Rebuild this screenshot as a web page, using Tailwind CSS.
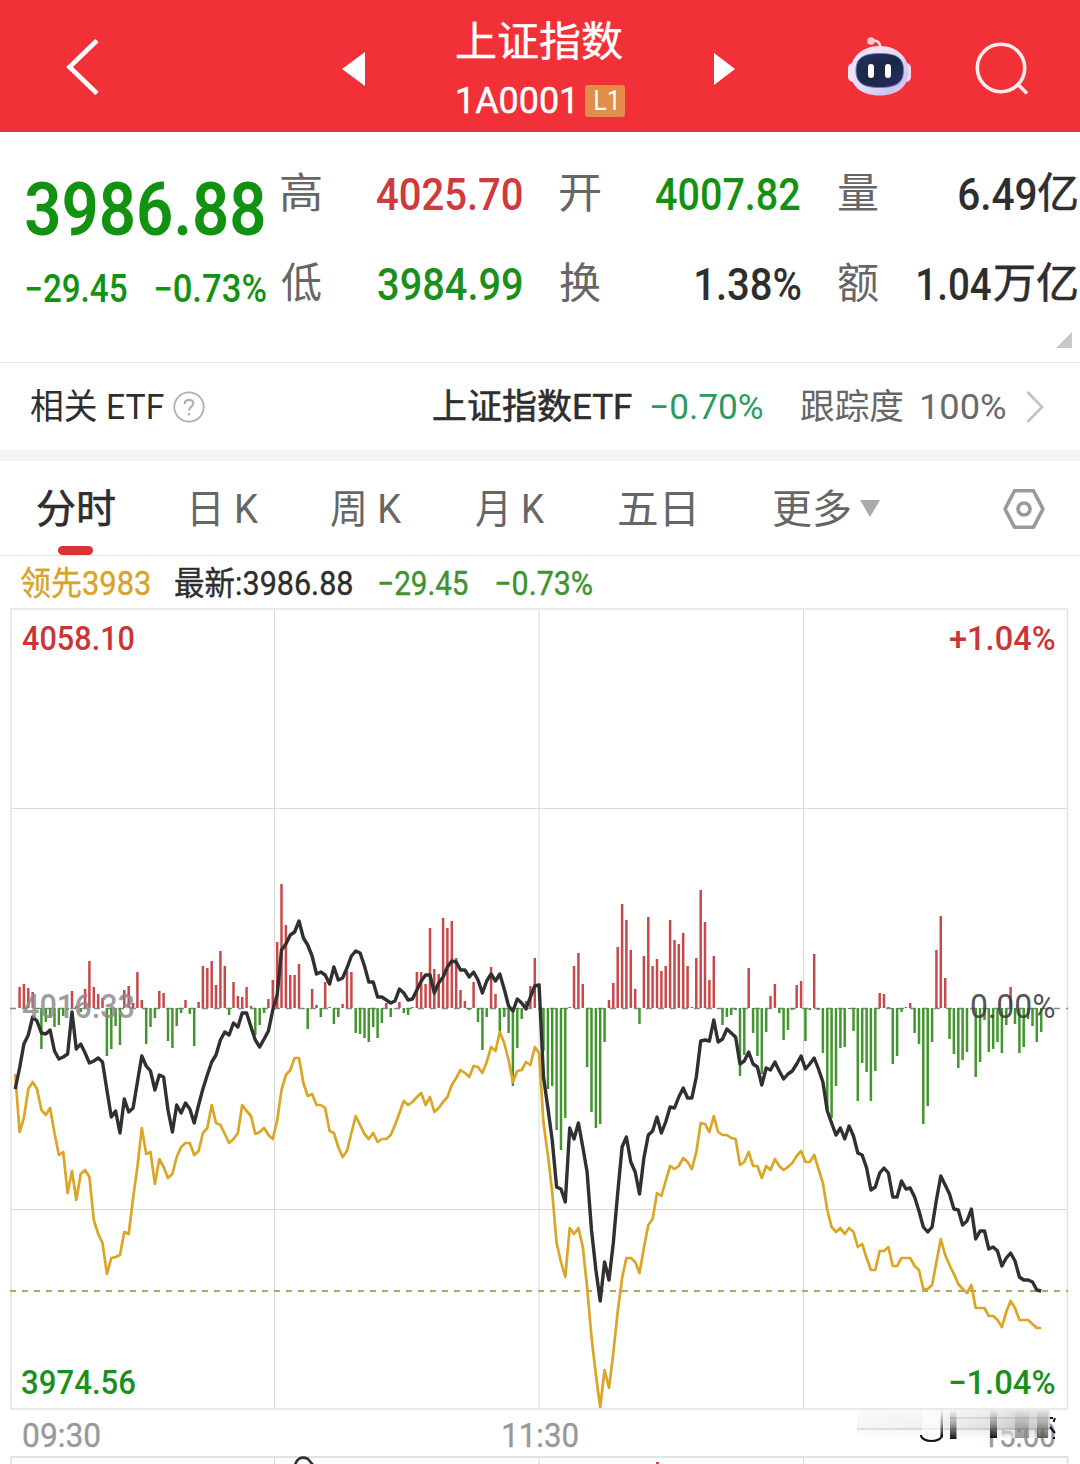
<!DOCTYPE html>
<html lang="zh-CN">
<head>
<meta charset="utf-8">
<title>上证指数</title>
<script src="https://cdn.jsdelivr.net/npm/@tailwindcss/browser@4"></script>
</head>
<body class="bg-white">
<main class="w-[1080px] h-[1464px] overflow-hidden flex flex-col bg-white font-['Roboto','Noto_Sans_CJK_SC',sans-serif] text-[#2e2e2e]">

  <!-- Title bar -->
  <header class="h-[132px] shrink-0 flex bg-[#f23037] border-b-2 border-[#d8333b] text-white">
    <svg class="w-[50px] h-[130px] ml-[58px] shrink-0" viewBox="58 0 50 130" fill="none" stroke="#fff" stroke-width="4.6"><path d="M97 40.500 69.500 67 97 93.500"/></svg>
    <svg class="w-[24px] h-[130px] ml-[234px] shrink-0" viewBox="342 0 24 130" fill="#fff"><path d="M342 69 365 52V86Z"/></svg>
    <div class="ml-[91px] w-[168px] shrink-0 flex flex-col">
      <div class="h-[46px] mt-[16px] leading-[46px] text-[41px] font-['Noto_Sans_CJK_SC',sans-serif]"><span data-fit class="block w-[165px] -mt-[1px] [-webkit-text-stroke:0.4px]">上证指数</span></div>
      <div class="mt-[21px] h-[36px] flex items-center">
        <span data-fit class="block w-[114px] ml-[1px] text-[36px] leading-[36px] [-webkit-text-stroke:0.5px]">1A0001</span>
        <div class="ml-[13px] w-[40px] h-[32px] shrink-0 rounded-[3px] bg-[#e08e4a] flex items-center justify-center"><span data-fit class="block w-[21px] text-[27px] leading-[32px]">L1</span></div>
      </div>
    </div>
    <svg class="w-[22px] h-[130px] ml-[89px] shrink-0" viewBox="714 0 22 130" fill="#fff"><path d="M714 53 735 69 714 85Z"/></svg>
    <svg class="w-[70px] h-[130px] ml-[108px] shrink-0" viewBox="844 0 70 130">
      <defs>
        <linearGradient id="shell" x1="0" y1="0" x2="1" y2="1"><stop offset="0" stop-color="#ffe9f0"/><stop offset=".5" stop-color="#e6dcfa"/><stop offset=".8" stop-color="#c9c4f6"/><stop offset="1" stop-color="#ffd7df"/></linearGradient>
        <linearGradient id="visor" x1="0" y1="0" x2="1" y2="1"><stop offset="0" stop-color="#25335c"/><stop offset=".5" stop-color="#1b2744"/><stop offset="1" stop-color="#25305f"/></linearGradient>
      </defs>
      <path d="M872 41C877 40 880 42 880 47" fill="none" stroke="#ffd9de" stroke-width="2.600"/>
      <circle cx="871" cy="41" r="3.800" fill="#ffc9d0"/>
      <rect x="848" y="63" width="10" height="19" rx="5" fill="#fbe6f2"/><rect x="901" y="63" width="10" height="19" rx="5" fill="#f6d6ee"/>
      <path d="M880 46C897 46 908.500 57 908.500 72C908.500 86 898 95.500 879.500 95.500C861 95.500 850.500 86 850.500 72C850.500 57 862 46 880 46Z" fill="url(#shell)"/>
      <path d="M880 53.500C897 53.500 903.500 58 903.500 70.500C903.500 83 896 87.500 880 87.500C863 87.500 856 83 856 70.500C856 58 863 53.500 880 53.500Z" fill="url(#visor)" stroke="#6f78c8" stroke-width="1"/>
      <rect x="868" y="64" width="6" height="14" rx="3" fill="#fff"/><rect x="885" y="64" width="6" height="14" rx="3" fill="#fff"/>
    </svg>
    <svg class="w-[60px] h-[130px] ml-[58px] shrink-0" viewBox="972 0 60 130" fill="none" stroke="#ffeceb" stroke-width="3.600"><circle cx="1001" cy="68" r="23.700"/><path d="M1017.500 84 1027 93.500"/></svg>
  </header>

  <!-- Quote summary -->
  <section class="h-[231px] shrink-0 border-b border-[#e8e8e8] flex text-[43.500px] font-medium">
    <div class="ml-[26px] w-[255px] shrink-0 text-[#119211]">
      <div class="mt-[35px] h-[84px]"><span data-fit class="block w-[238px] text-[75px] leading-[84px] font-semibold">3986.88</span></div>
      <div class="mt-[16px] flex text-[38px] leading-[44px]"><span data-fit class="block w-[101px]">−29.45</span><span data-fit class="block w-[111px] ml-[28px]">−0.73%</span></div>
    </div>
    <div class="mt-[32px] shrink-0 flex flex-col gap-[30px] leading-[60px]">
      <div class="flex h-[60px]">
        <span data-fit class="block w-[40px] text-[42px] font-normal text-[#666]">高</span>
        <span data-fit class="block w-[145px] ml-[56px] mt-[2px] text-[#d03a3c]">4025.70</span>
        <span data-fit class="block w-[40px] ml-[38px] text-[42px] font-normal text-[#666]">开</span>
        <span data-fit class="block w-[144px] ml-[56px] mt-[2px] text-[#119211]">4007.82</span>
        <span data-fit class="block w-[40px] ml-[38px] text-[42px] font-normal text-[#666]">量</span>
        <span data-fit class="block w-[77px] ml-[81px] mt-[2px]">6.49</span>
        <span data-fit class="block w-[39px] ml-[2px] text-[42px] font-normal [-webkit-text-stroke:0.6px]">亿</span>
      </div>
      <div class="flex h-[60px]">
        <span data-fit class="block w-[40px] text-[42px] font-normal text-[#666]">低</span>
        <span data-fit class="block w-[144px] ml-[57px] mt-[2px] text-[#1b8f1b]">3984.99</span>
        <span data-fit class="block w-[40px] ml-[38px] text-[42px] font-normal text-[#666]">换</span>
        <span data-fit class="block w-[105px] ml-[96px] mt-[2px]">1.38%</span>
        <span data-fit class="block w-[40px] ml-[37px] text-[42px] font-normal text-[#666]">额</span>
        <span data-fit class="block w-[73px] ml-[40px] mt-[2px]">1.04</span>
        <span data-fit class="block w-[83px] ml-[3px] text-[42px] font-normal [-webkit-text-stroke:0.6px]">万亿</span>
      </div>
      <svg class="w-[16px] h-[16px] self-end -mt-[12px] mr-[5px]" viewBox="0 0 16 16"><path d="M16 0V16H0Z" fill="#c9c9c9"/></svg>
    </div>
  </section>

  <!-- Related ETF -->
  <section class="h-[87px] shrink-0 flex items-center text-[35px] leading-[50px]">
    <span data-fit class="block w-[133px] ml-[31px] mt-[2px]">相关 ETF</span>
    <svg class="w-[32px] h-[32px] ml-[9px] shrink-0" viewBox="0 0 32 32" fill="none" stroke="#b0b0b0" stroke-width="1.800"><circle cx="16" cy="16" r="14.700"/><path d="M11.800 13C11.800 7.500 20.300 7.500 20.300 12.500C20.300 15.500 16 16 16 19.500M16 22V24.500" stroke-width="2.200"/></svg>
    <span data-fit class="block w-[199px] ml-[228px] mt-[2px] [-webkit-text-stroke:0.6px]">上证指数ETF</span>
    <span data-fit class="block w-[112px] ml-[19px] mt-[2px] text-[#2a9c60]">−0.70%</span>
    <span data-fit class="block w-[102px] ml-[38px] mt-[2px] text-[#666]">跟踪度</span>
    <span data-fit class="block w-[85px] ml-[18px] mt-[2px] text-[#6a6a6a]">100%</span>
    <svg class="w-[18px] h-[34px] ml-[20px] shrink-0" viewBox="0 0 18 34" fill="none" stroke="#c2c2c2" stroke-width="2.600"><path d="M1.500 2 16 17 1.500 32"/></svg>
  </section>
  <div class="h-[11px] shrink-0 bg-[#f4f4f4]"></div>

  <!-- Period tabs -->
  <nav class="h-[95px] shrink-0 flex border-b border-[#e4e4e4] text-[40px] leading-[97px] text-[#666]">
    <div class="ml-[37px] w-[78px] shrink-0 flex flex-col text-[#2e2e2e]">
      <span data-fit class="block w-[78px] h-[85px] [-webkit-text-stroke:0.7px]">分时</span>
      <div class="w-[35px] h-[9px] ml-[21px] rounded-full bg-[#dc3335]"></div>
    </div>
    <span data-fit class="block w-[66px] ml-[78px]">日 K</span>
    <span data-fit class="block w-[71px] ml-[72px]">周 K</span>
    <span data-fit class="block w-[69px] ml-[74px]">月 K</span>
    <span data-fit class="block w-[75px] ml-[74px]">五日</span>
    <span data-fit class="block w-[77px] ml-[79px]">更多</span>
    <svg class="w-[20px] h-[18px] ml-[10px] mt-[39px] shrink-0" viewBox="0 0 20 18"><path d="M0 0H20L10 17Z" fill="#aaa"/></svg>
    <svg class="w-[44px] h-[44px] ml-[122px] mt-[26px] shrink-0" viewBox="0 0 44 44" fill="none" stroke="#999" stroke-width="3.600" stroke-linejoin="round"><path d="M12.500 3.800H31.500L41 22 31.500 40.200H12.500L3 22Z"/><circle cx="22" cy="22" r="6"/></svg>
  </nav>

  <!-- Intraday legend -->
  <div class="h-[52px] shrink-0 flex text-[33px] leading-[56px] [-webkit-text-stroke:0.4px]">
    <span data-fit class="block w-[129px] ml-[21px] text-[#d9a32a]">领先3983</span>
    <span data-fit class="block w-[177px] ml-[25px]">最新:3986.88</span>
    <span data-fit class="block w-[89px] ml-[27px] text-[#3f922e]">−29.45</span>
    <span data-fit class="block w-[96px] ml-[28px] text-[#3f922e]">−0.73%</span>
  </div>

  <!-- Intraday chart -->
  <section class="relative h-[802px] shrink-0 text-[33.500px] leading-[45px] font-medium">
    <svg class="block w-[1080px] h-[802px]" viewBox="0 608 1080 802" fill="none">
      <g stroke="#dadada" stroke-width="1"><path d="M274.500 609V1409M539 609V1409M803.500 609V1409M11 808.500H1067M11 1209.500H1067"/><path d="M11 609H1067.500V1409H11Z" stroke="#e4e4e4" stroke-width="1.600"/></g>
      <path d="M10 1008.500H1068" stroke="#888" stroke-width="1.300" stroke-dasharray="6 6"/>
      <path id="up" stroke="#c9494b" stroke-width="2.500"/>
      <path id="down" stroke="#43962f" stroke-width="2.500"/>
      <path d="M10 1291H1068" stroke="#b7a469" stroke-width="1.800" stroke-dasharray="6 6"/>
      <polyline id="lead" stroke="#dba526" stroke-width="2.700" stroke-linejoin="round"/>
      <polyline id="price" stroke="#303030" stroke-width="3.400" stroke-linejoin="round"/>
    </svg>
    <span data-fit class="absolute left-[22px] top-[8px] w-[112px] text-[#cc3537]">4058.10</span>
    <span data-fit class="absolute left-[950px] top-[8px] w-[105px] text-[#cc3537]">+1.04%</span>
    <span data-fit class="absolute left-[22px] top-[376px] w-[112px] text-[#8c8c8c]/85">4016.33</span>
    <span data-fit class="absolute left-[971px] top-[376px] w-[84px] font-normal text-[#3c3c3c]/90">0.00%</span>
    <span data-fit class="absolute left-[22px] top-[752px] w-[113px] text-[#1b8f1b]">3974.56</span>
    <span data-fit class="absolute left-[950px] top-[752px] w-[105px] text-[#1b8f1b]">−1.04%</span>
  </section>

  <!-- Time axis -->
  <div class="relative h-[46px] shrink-0 flex text-[34px] leading-[50px] text-[#999] [-webkit-text-stroke:0.4px]">
    <span data-fit class="block w-[77px] ml-[23px]">09:30</span>
    <span data-fit class="block w-[75px] ml-[403px]">11:30</span>
    <span data-fit class="block w-[71px] ml-[406px]">15:00</span>
    <svg class="absolute left-[850px] top-0 w-[210px] h-[36px]" viewBox="850 1410 210 36" fill="none">
      <defs>
        <linearGradient id="fade" x1="0" y1="0" x2="1" y2="0"><stop offset="0" stop-color="#f5f5f5"/><stop offset=".5" stop-color="#ececec"/><stop offset=".7" stop-color="#dcdcdc"/><stop offset=".83" stop-color="#c4c4c4"/><stop offset="1" stop-color="#ccc"/></linearGradient>
        <linearGradient id="ink" x1="0" y1="0" x2="0" y2="1"><stop offset="0" stop-color="#222" stop-opacity="0"/><stop offset=".5" stop-color="#222" stop-opacity=".4"/><stop offset="1" stop-color="#111"/></linearGradient>
        <linearGradient id="veil" x1="0" y1="0" x2="0" y2="1"><stop offset="0" stop-color="#fff" stop-opacity=".55"/><stop offset=".7" stop-color="#fff" stop-opacity="0"/><stop offset="1" stop-color="#fff" stop-opacity=".6"/></linearGradient>
      </defs>
      <path d="M857 1410H1050V1430H857Z" fill="url(#fade)"/>
      <path d="M857 1430H1050V1438H857Z" fill="url(#fade)" opacity=".5"/>
      <path d="M857 1410H1050V1438H857Z" fill="url(#veil)"/>
      <path d="M857 1429H1053M950 1418H1053" stroke="#999" stroke-opacity=".25" stroke-width="2"/>
      <path d="M922 1410H941V1438H922Z" fill="#fff" opacity=".6"/>
      <g fill="url(#ink)"><path d="M950 1410H956.500V1439H950Z"/><path d="M990 1410H997V1438H990Z"/><path d="M940.500 1410H943V1437H940.500Z"/><path d="M1015 1410H1029V1438H1015Z" opacity=".4"/><path d="M1037 1410H1048V1438H1037Z" opacity=".65"/></g>
      <path d="M921 1435C921 1443 942 1443 942 1435" stroke="#111" stroke-width="2"/>
      <path d="M1050 1418H1053M1053.500 1422 1055 1418M1050 1427 1055 1433M1053 1438H1055" stroke="#111" stroke-width="2"/>
    </svg>
  </div>

  <!-- Top edge of the volume panel -->
  <svg class="block w-[1080px] h-[8px] shrink-0" viewBox="0 1456 1080 8" fill="none">
    <path d="M11 1464V1457H1067.500V1464" stroke="#e2e2e2" stroke-width="1.800"/><path d="M274.500 1457V1464M539 1457V1464M803.500 1457V1464" stroke="#dadada"/>
    <path d="M295 1465C298 1456 304 1457 308 1459L313 1465" stroke="#303030" stroke-width="2.600"/><path d="M656 1462H659V1464H656Z" fill="#c9494b"/>
  </svg>
</main>

<script>
  // Fit each label's ink to the width of its box, whatever the digit widths of the font.
  const ctx = document.createElement('canvas').getContext('2d');
  const fit = box => {
    if (!box.clientWidth) return;
    const cs = getComputedStyle(box);
    ctx.font = `${cs.fontWeight} ${cs.fontSize} ${cs.fontFamily}`;
    const m = ctx.measureText(box.textContent);
    const k = box.clientWidth / (m.actualBoundingBoxLeft + m.actualBoundingBoxRight);
    box.firstElementChild.style.transform = `translateX(${m.actualBoundingBoxLeft * k}px) scaleX(${k})`;
  };
  const labels = [...document.querySelectorAll('[data-fit]')];
  const resized = new ResizeObserver(entries => entries.forEach(e => fit(e.target)));
  labels.forEach(box => {
    const inner = document.createElement('span');
    inner.className = 'block w-max origin-left whitespace-nowrap';
    inner.textContent = box.textContent;
    box.classList.add('shrink-0');
    box.replaceChildren(inner);
    resized.observe(box);
  });
  addEventListener('load', () => labels.forEach(fit));

  // One value per minute from 09:30; bars are momentum above (+) or below (-) the previous close.
  const bars = [0,21,24,20,16,-1,-41,-14,-10,-19,-17,-8,-2,17,2,-4,19,47,21,14,10,-48,-41,-18,-37,18,22,5,36,8,-36,-19,-10,17,15,-33,-40,-18,-5,8,-6,-38,6,42,40,47,23,57,42,-7,26,12,11,21,2,-27,-17,-5,9,28,
    66,124,83,33,33,44,-1,-21,19,3,-9,26,1,-16,-9,4,37,36,-25,-26,-30,-34,-19,-30,-15,5,-9,0,6,-5,-7,1,36,36,24,80,39,34,90,80,87,50,18,7,-2,26,-14,-42,-9,41,14,-23,-9,-25,-78,-40,-11,7,22,50,
    0,-43,-81,-78,-122,-142,-110,1,42,55,24,-59,-104,-120,-116,-34,8,25,61,104,88,58,19,-16,52,91,42,49,37,42,88,68,64,75,42,1,50,118,86,28,52,-1,-17,-9,-7,-2,-68,-47,40,-25,-48,-66,-24,12,24,-5,-32,-22,-2,23,
    27,-33,-2,54,-2,-45,-102,-110,-78,-40,-39,-1,-23,-93,-55,-64,-93,-63,15,14,1,-56,-48,-4,1,5,-25,-36,-116,-98,-34,58,92,30,-31,-46,-60,-52,-44,0,-69,-54,-12,-44,-41,-34,-45,-17,21,-16,-45,-39,-11,-18,-34,-24];
  const price = [1089,1068,1044,1035,1017,1021,1033,1034,1030,1051,1059,1057,1054,1012,1049,1044,1053,1063,1061,1058,1062,1090,1117,1111,1133,1099,1112,1108,1082,1056,1066,1071,1090,1075,1077,1110,1132,1105,1113,1103,1109,1123,1105,1089,1075,1062,1055,1040,1032,1035,1023,1027,1013,1013,1027,1040,1047,1039,1031,1010,
    995,950,944,935,932,921,938,945,956,974,972,975,984,967,980,978,968,956,951,953,966,982,982,997,997,1000,1003,1001,989,993,1000,999,990,981,975,975,993,983,977,967,961,962,970,970,977,972,980,993,981,974,981,974,989,1006,1011,999,1003,1009,997,986,
    985,1077,1108,1140,1187,1189,1202,1128,1139,1123,1147,1172,1230,1270,1301,1262,1280,1243,1193,1147,1137,1162,1172,1194,1158,1135,1131,1117,1133,1122,1107,1108,1097,1088,1098,1098,1077,1041,1040,1041,1020,1042,1039,1029,1033,1037,1064,1061,1052,1064,1067,1085,1068,1070,1062,1071,1079,1074,1071,1064,
    1056,1069,1064,1058,1069,1082,1111,1123,1135,1128,1139,1126,1136,1153,1155,1168,1190,1187,1173,1168,1173,1197,1197,1181,1189,1188,1197,1211,1227,1232,1227,1200,1176,1185,1194,1209,1210,1225,1221,1209,1239,1231,1231,1249,1247,1251,1266,1258,1253,1261,1277,1280,1280,1282,1290,1291];
  const lead = [1074,1132,1118,1089,1082,1089,1110,1115,1108,1133,1155,1152,1193,1171,1200,1174,1170,1177,1220,1234,1243,1274,1258,1257,1255,1232,1234,1198,1167,1128,1154,1152,1184,1159,1167,1178,1174,1157,1147,1143,1143,1155,1151,1133,1128,1105,1123,1125,1134,1143,1139,1133,1105,1111,1116,1134,1132,1128,1135,1139,
    1120,1090,1075,1070,1058,1058,1083,1096,1094,1105,1105,1108,1131,1133,1147,1157,1151,1133,1116,1125,1134,1139,1133,1142,1139,1139,1135,1125,1113,1101,1105,1102,1097,1093,1105,1097,1112,1108,1102,1097,1085,1078,1070,1073,1077,1066,1067,1073,1062,1047,1051,1032,1043,1060,1082,1071,1070,1062,1065,1047,
    1053,1123,1155,1192,1243,1262,1277,1228,1234,1228,1247,1287,1337,1375,1407,1370,1388,1353,1312,1278,1258,1258,1262,1273,1248,1225,1219,1193,1196,1181,1166,1169,1166,1158,1162,1169,1152,1123,1124,1132,1116,1132,1135,1135,1138,1139,1165,1162,1152,1166,1166,1178,1166,1170,1159,1166,1170,1167,1163,1156,
    1151,1162,1162,1155,1169,1183,1210,1227,1232,1228,1234,1228,1232,1247,1244,1258,1270,1270,1251,1251,1247,1266,1266,1258,1258,1258,1266,1270,1289,1289,1285,1262,1239,1255,1265,1274,1284,1289,1293,1285,1308,1308,1308,1316,1316,1320,1327,1312,1301,1308,1320,1320,1320,1324,1328,1328];
  const x = i => (15.2 + 4.366 * i).toFixed(1);
  const sticks = sign => bars.map((h, i) => h * sign > 0 ? `M${x(i)} 1008V${1008 - h}` : '').join('');
  document.getElementById('up').setAttribute('d', sticks(1));
  document.getElementById('down').setAttribute('d', sticks(-1));
  const points = ys => ys.map((y, i) => `${x(i)},${y}`).join(' ');
  document.getElementById('price').setAttribute('points', points(price));
  document.getElementById('lead').setAttribute('points', points(lead));
</script>
</body>
</html>
